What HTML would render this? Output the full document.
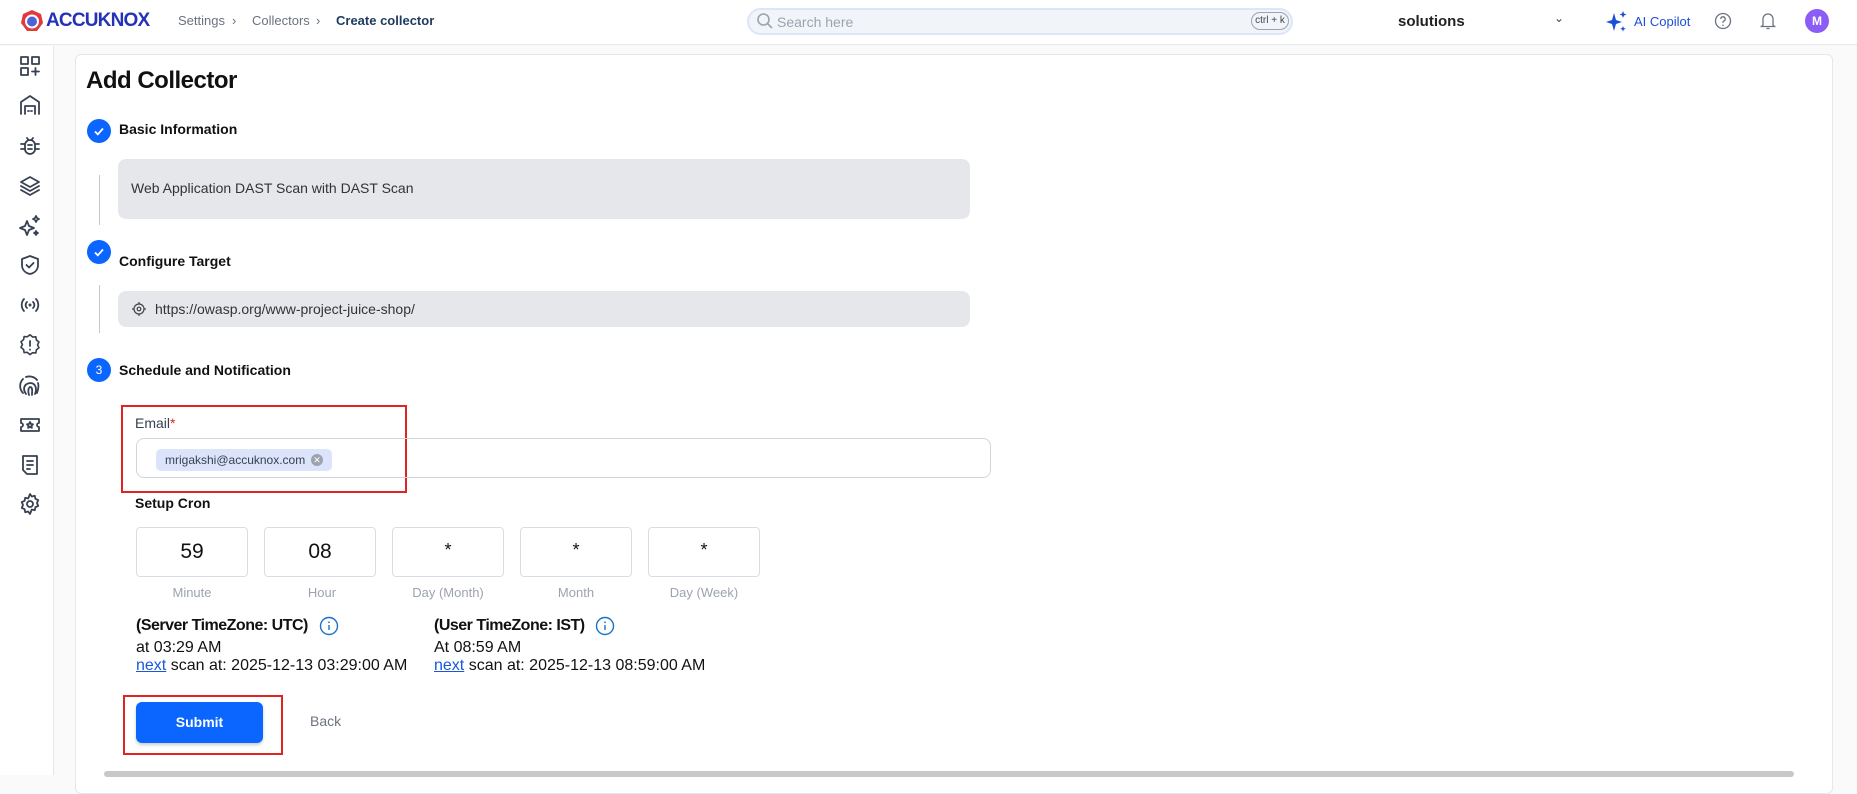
<!DOCTYPE html>
<html><head><meta charset="utf-8"><style>
*{box-sizing:border-box;margin:0;padding:0}
body{width:1857px;height:775px;overflow:hidden;background:#fafafa;font-family:"Liberation Sans",sans-serif;position:relative;color:#111}
.abs{position:absolute}
.hdr{left:0;top:0;width:1857px;height:45px;background:#fff;border-bottom:1px solid #e5e7eb}
.side{left:0;top:46px;width:54px;height:729px;background:#fff;border-right:1px solid #e5e7eb}
.card{left:75px;top:54px;width:1758px;height:740px;background:#fff;border:1px solid #e5e7eb;border-radius:6px}
.crumb{font-size:13px;color:#6b7280;top:13px}
.step{width:24px;height:24px;border-radius:50%;background:#0a66ff;color:#fff;font-size:12px;display:flex;align-items:center;justify-content:center}
.lbl{font-size:14px;font-weight:bold;color:#111}
.box{left:118px;width:852px;background:#e5e7eb;border-radius:8px;font-size:14px;color:#333}
.vl{width:1px;background:#c8c8c8;left:99px}
.cron{width:112px;height:50px;border:1px solid #d9dde3;border-radius:4px;top:527px;display:flex;align-items:center;justify-content:center;font-size:21px;color:#111}
.cl{top:585px;width:112px;text-align:center;font-size:13px;color:#9ca3af}
.tz{font-size:16px;font-weight:bold;top:617px;letter-spacing:-0.5px}
.t2{font-size:16px;color:#111}
a{color:#1a56db;text-decoration:underline}
.red{border:2px solid #e02424}
</style></head><body>
<div class="abs hdr"></div>
<div class="abs" style="left:20px;top:9px;width:24px;height:24px">
<svg width="24" height="24" viewBox="0 0 24 24"><polygon points="12,1 21,5 23,14 17,22 7,22 1,14 3,5" fill="#e23a3a"/><circle cx="12" cy="12.5" r="7" fill="#fff"/><circle cx="12" cy="12.5" r="5" fill="#4b63d8"/></svg></div>
<div class="abs" style="left:46px;top:10px;font-size:19px;font-weight:bold;color:#2432b8;letter-spacing:-0.8px">ACCUKNOX</div>
<div class="abs crumb" style="left:178px">Settings</div>
<div class="abs crumb" style="left:232px">›</div>
<div class="abs crumb" style="left:252px">Collectors</div>
<div class="abs crumb" style="left:316px">›</div>
<div class="abs crumb" style="left:336px;color:#1e3a5f;font-weight:bold">Create collector</div>
<div class="abs" style="left:747px;top:8px;width:546px;height:27px;background:#f1f4f9;border:2px solid #dbe7f8;border-radius:14px"></div>
<svg class="abs" style="left:756px;top:12px" width="18" height="18" viewBox="0 0 18 18"><circle cx="7.5" cy="7.5" r="5.5" stroke="#9ca3af" stroke-width="1.6" fill="none"/><path d="M11.5 11.5L16 16" stroke="#9ca3af" stroke-width="1.6"/></svg>
<div class="abs" style="left:777px;top:14px;font-size:14px;color:#9ca3af">Search here</div>
<div class="abs" style="left:1251px;top:12px;width:38px;height:18px;border:1px solid #9ca3af;border-radius:9px;font-size:10px;color:#444;text-align:center;line-height:16px">ctrl + k</div>
<div class="abs" style="left:1398px;top:13px;font-size:15px;font-weight:bold;color:#222">solutions</div>
<div class="abs" style="left:1554px;top:11px;font-size:12px;color:#444">⌄</div>
<svg class="abs" style="left:1605px;top:10px" width="24" height="24" viewBox="0 0 24 24"><path d="M9 3L11 10 17 12 11 14 9 21 7 14 1 12 7 10Z" fill="#1d4ed8"/><path d="M18 1l1 2.5 2.5 1-2.5 1-1 2.5-1-2.5-2.5-1 2.5-1z" fill="#1d4ed8"/><path d="M18 16l.8 2 2 .8-2 .8-.8 2-.8-2-2-.8 2-.8z" fill="#1d4ed8"/></svg>
<div class="abs" style="left:1634px;top:14px;font-size:13px;color:#1d4ed8">AI Copilot</div>
<svg class="abs" style="left:1714px;top:12px" width="18" height="18" viewBox="0 0 18 18"><circle cx="9" cy="9" r="7.5" stroke="#6b7280" stroke-width="1.3" fill="none"/><path d="M6.8 7a2.2 2.2 0 1 1 2.9 2.1c-.5.2-.7.6-.7 1.2v.6" stroke="#6b7280" stroke-width="1.3" fill="none"/><circle cx="9" cy="13.3" r=".8" fill="#6b7280"/></svg>
<svg class="abs" style="left:1759px;top:11px" width="18" height="20" viewBox="0 0 18 20"><path d="M4 14V8a5 5 0 0 1 10 0v6l1.5 1.5h-13z" stroke="#6b7280" stroke-width="1.3" fill="none"/><path d="M7.5 17.5h3" stroke="#6b7280" stroke-width="1.3"/></svg>
<div class="abs" style="left:1805px;top:9px;width:24px;height:24px;border-radius:50%;background:#8b5cf6;color:#fff;font-size:12px;font-weight:bold;text-align:center;line-height:24px">M</div>

<div class="abs side"></div>
<svg class="abs" style="left:18px;top:46px" width="24" height="480" viewBox="0 0 24 480" fill="none" stroke="#374151" stroke-width="1.8" stroke-linecap="round" stroke-linejoin="round">
<g transform="translate(0,8)"><rect x="3" y="3" width="7" height="7"/><rect x="14" y="3" width="7" height="7"/><rect x="3" y="14" width="7" height="7"/><path d="M17.5 14v7M14 17.5h7"/></g>
<g transform="translate(0,47)"><path d="M3 21V9l9-6 9 6v12"/><path d="M7 21v-8h10v8"/><path d="M10 18h1M13 18h1"/></g>
<g transform="translate(0,88)"><rect x="7" y="6" width="10" height="14" rx="5"/><path d="M9 4l1.5 2M15 4l-1.5 2M3 10h4M17 10h4M3 15h4M17 15h4M10 11h4M10 15h4"/></g>
<g transform="translate(0,128)"><path d="M12 3l9 5-9 5-9-5z"/><path d="M3 12l9 5 9-5"/><path d="M3 16l9 5 9-5"/></g>
<g transform="translate(0,168)"><path d="M9 7l2 5 5 2-5 2-2 5-2-5-5-2 5-2z"/><path d="M18 2l1 2 2 1-2 1-1 2-1-2-2-1 2-1z"/><path d="M18 17l.7 1.3 1.3.7-1.3.7-.7 1.3-.7-1.3-1.3-.7 1.3-.7z"/></g>
<g transform="translate(0,207)"><path d="M12 3l8 3v6c0 5-3.5 8-8 9-4.5-1-8-4-8-9V6z"/><path d="M8.5 12l2.5 2.5 4.5-4.5"/></g>
<g transform="translate(0,247)"><path d="M6 6a9 9 0 0 0 0 12M18 6a9 9 0 0 1 0 12M9 9a4 4 0 0 0 0 6M15 9a4 4 0 0 1 0 6"/><circle cx="12" cy="12" r=".6" fill="#374151"/></g>
<g transform="translate(0,287)"><path d="M12 2l3 2.5 3.5-.3.6 3.5 2.9 2.3-1.6 3.2 1.6 3.2-2.9 2.3-.6 3.5-3.5-.3L12 24l-3-2.5-3.5.3-.6-3.5L2 16l1.6-3.2L2 9.7l2.9-2.3.6-3.5 3.5.3z" transform="scale(.9) translate(1.3,0)"/><path d="M12 8v5M12 16.5v.3"/></g>
<g transform="translate(0,327)"><path d="M5 20a10 10 0 0 1 0-14M8 21c-3-4-3-10 4-11 6 0 7 6 5 11M11 22c-1-3-1-7 1-8 3 0 2 5 2 8M8 4a10 10 0 0 1 11 3M20 10c1 3 0 7-1 10"/></g>
<g transform="translate(0,367)"><path d="M3 6h18v4a2 2 0 0 0 0 4v4H3v-4a2 2 0 0 0 0-4z"/><path d="M12 9l1 2 2 .3-1.5 1.4.4 2.1-1.9-1-1.9 1 .4-2.1L9 11.3l2-.3z"/></g>
<g transform="translate(0,407)"><path d="M5 3h14v18H9l-4-4z"/><path d="M9 8h6M9 12h6M9 16h3"/></g>
<g transform="translate(0,446)"><circle cx="12" cy="12" r="3"/><path d="M12 2l1.8 2.5 3-.7.6 3 2.8 1.3-1.2 2.9 1.2 2.9-2.8 1.3-.6 3-3-.7L12 22l-1.8-2.5-3 .7-.6-3-2.8-1.3 1.2-2.9-1.2-2.9 2.8-1.3.6-3 3 .7z"/></g>
</svg>

<div class="abs card"></div>
<div class="abs" style="left:86px;top:67px;font-size:24px;font-weight:bold;letter-spacing:-0.5px">Add Collector</div>

<div class="abs step" style="left:87px;top:119px"><svg width="14" height="14" viewBox="0 0 14 14"><path d="M3 7.5l2.8 2.8L11 4.5" stroke="#fff" stroke-width="1.8" fill="none"/></svg></div>
<div class="abs lbl" style="left:119px;top:121px">Basic Information</div>
<div class="abs vl" style="top:175px;height:50px"></div>
<div class="abs box" style="top:159px;height:60px;padding:21px 13px">Web Application DAST Scan with DAST Scan</div>

<div class="abs step" style="left:87px;top:240px"><svg width="14" height="14" viewBox="0 0 14 14"><path d="M3 7.5l2.8 2.8L11 4.5" stroke="#fff" stroke-width="1.8" fill="none"/></svg></div>
<div class="abs lbl" style="left:119px;top:253px">Configure Target</div>
<div class="abs vl" style="top:285px;height:48px"></div>
<div class="abs box" style="top:291px;height:36px"></div>
<svg class="abs" style="left:131px;top:301px" width="16" height="16" viewBox="0 0 16 16" fill="none" stroke="#444" stroke-width="1.2"><circle cx="8" cy="8" r="5"/><circle cx="8" cy="8" r="1.8"/><path d="M8 1v2M8 13v2M1 8h2M13 8h2"/></svg>
<div class="abs" style="left:155px;top:301px;font-size:14px;color:#333">https://owasp.org/www-project-juice-shop/</div>

<div class="abs step" style="left:87px;top:358px">3</div>
<div class="abs lbl" style="left:119px;top:362px">Schedule and Notification</div>

<div class="abs red" style="left:121px;top:405px;width:286px;height:88px"></div>
<div class="abs" style="left:135px;top:415px;font-size:14px;color:#374151">Email<span style="color:#e02424">*</span></div>
<div class="abs" style="left:136px;top:438px;width:855px;height:40px;border:1px solid #d1d5db;border-radius:8px"></div>
<div class="abs" style="left:156px;top:449px;width:176px;height:22px;background:#dbe4fb;border-radius:5px;font-size:12px;color:#374151;line-height:22px;padding-left:9px">mrigakshi@accuknox.com</div>
<div class="abs" style="left:311px;top:454px;width:12px;height:12px;border-radius:50%;background:#9ca3af;color:#fff;font-size:9px;text-align:center;line-height:12px">✕</div>

<div class="abs lbl" style="left:135px;top:495px">Setup Cron</div>
<div class="abs cron" style="left:136px">59</div>
<div class="abs cron" style="left:264px">08</div>
<div class="abs cron" style="left:392px;align-items:flex-start;padding-top:12px;font-size:18px">*</div>
<div class="abs cron" style="left:520px;align-items:flex-start;padding-top:12px;font-size:18px">*</div>
<div class="abs cron" style="left:648px;align-items:flex-start;padding-top:12px;font-size:18px">*</div>
<div class="abs cl" style="left:136px">Minute</div>
<div class="abs cl" style="left:266px">Hour</div>
<div class="abs cl" style="left:392px">Day (Month)</div>
<div class="abs cl" style="left:520px">Month</div>
<div class="abs cl" style="left:648px">Day (Week)</div>

<div class="abs tz" style="left:136px">(Server TimeZone: UTC)</div>
<svg class="abs" style="left:319px;top:616px" width="20" height="20" viewBox="0 0 20 20"><circle cx="10" cy="10" r="8.5" stroke="#1a73c8" stroke-width="1.4" fill="none"/><path d="M10 9v5" stroke="#1a73c8" stroke-width="1.4"/><circle cx="10" cy="6.3" r=".9" fill="#1a73c8"/></svg>
<div class="abs tz" style="left:434px">(User TimeZone: IST)</div>
<svg class="abs" style="left:595px;top:616px" width="20" height="20" viewBox="0 0 20 20"><circle cx="10" cy="10" r="8.5" stroke="#1a73c8" stroke-width="1.4" fill="none"/><path d="M10 9v5" stroke="#1a73c8" stroke-width="1.4"/><circle cx="10" cy="6.3" r=".9" fill="#1a73c8"/></svg>
<div class="abs t2" style="left:136px;top:639px">at 03:29 AM</div>
<div class="abs t2" style="left:136px;top:657px"><a>next</a> scan at: 2025-12-13 03:29:00 AM</div>
<div class="abs t2" style="left:434px;top:639px">At 08:59 AM</div>
<div class="abs t2" style="left:434px;top:657px"><a>next</a> scan at: 2025-12-13 08:59:00 AM</div>

<div class="abs red" style="left:123px;top:695px;width:160px;height:60px"></div>
<div class="abs" style="left:136px;top:702px;width:127px;height:41px;background:#0a66ff;border-radius:6px;box-shadow:0 2px 3px rgba(0,0,0,.2);color:#fff;font-size:14px;font-weight:bold;text-align:center;line-height:41px">Submit</div>
<div class="abs" style="left:310px;top:713px;font-size:14px;color:#6b7280">Back</div>

<div class="abs" style="left:104px;top:771px;width:1690px;height:6px;background:#c8c8c8;border-radius:3px"></div>
</body></html>
